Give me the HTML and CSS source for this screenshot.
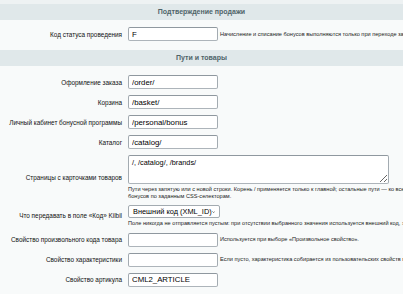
FILE: index.html
```html
<!DOCTYPE html>
<html lang="ru">
<head>
<meta charset="utf-8">
<title>Настройки</title>
<link rel="stylesheet" href="styles.css">
</head>
<body>
<div class="page">
  <div class="heading">Подтверждение продажи</div>
  <div class="section section-first">
    <div class="row">
      <div class="label">Код статуса проведения</div>
      <div class="field inline">
        <input class="input" type="text" value="F">
        <span class="hint">Начисление и списание бонусов выполняются только при переходе заказа в этот статус.</span>
      </div>
    </div>
  </div>

  <div class="heading">Пути и товары</div>
  <div class="section">
    <div class="row">
      <div class="label">Оформление заказа</div>
      <div class="field"><input class="input" type="text" value="/order/"></div>
    </div>
    <div class="row">
      <div class="label">Корзина</div>
      <div class="field"><input class="input" type="text" value="/basket/"></div>
    </div>
    <div class="row">
      <div class="label">Личный кабинет бонусной программы</div>
      <div class="field"><input class="input" type="text" value="/personal/bonus"></div>
    </div>
    <div class="row">
      <div class="label">Каталог</div>
      <div class="field"><input class="input" type="text" value="/catalog/"></div>
    </div>
    <div class="row">
      <div class="label">Страницы с карточками товаров</div>
      <div class="field">
        <textarea class="textarea">/, /catalog/, /brands/</textarea>
        <div class="hint block">
          <span class="hint-line">Пути через запятую или с новой строки. Корень / применяется только к главной; остальные пути — ко всем вложенным. Поиск</span>
          <span class="hint-line">бонусов по заданным CSS-селекторам.</span>
        </div>
      </div>
    </div>
    <div class="row">
      <div class="label">Что передавать в поле «Код» Kilbil</div>
      <div class="field">
        <div class="select">
          <span class="select-text">Внешний код (XML_ID)</span>
          <svg class="chevron" viewBox="0 0 8 5" width="6" height="4"><path d="M1 1l3 3 3-3" fill="none" stroke="#222" stroke-width="1.4"/></svg>
        </div>
        <div class="hint block">
          <span class="hint-line">Поле никогда не отправляется пустым: при отсутствии выбранного значения используется внешний код, затем ID.</span>
        </div>
      </div>
    </div>
    <div class="row">
      <div class="label">Свойство произвольного кода товара</div>
      <div class="field inline">
        <input class="input" type="text" value="">
        <span class="hint">Используется при выборе «Произвольное свойство».</span>
      </div>
    </div>
    <div class="row">
      <div class="label">Свойство характеристики</div>
      <div class="field inline">
        <input class="input" type="text" value="">
        <span class="hint">Если пусто, характеристика собирается из пользовательских свойств предложения.</span>
      </div>
    </div>
    <div class="row">
      <div class="label">Свойство артикула</div>
      <div class="field"><input class="input" type="text" value="CML2_ARTICLE"></div>
    </div>
  </div>
</div>
</body>
</html>
```

FILE: styles.css
```css
html, body {
  margin: 0;
  padding: 0;
}

body {
  background: #f8fafa;
  font-family: "Liberation Sans", Arial, sans-serif;
  color: #000;
  overflow: hidden;
  width: 403px;
  height: 294px;
}

.page {
  padding-top: 4px;
  background: linear-gradient(#eef2f3 0, #eef2f3 4px, #f8fafa 4px);
  width: 403px;
  overflow: hidden;
}

.heading {
  height: 16px;
  line-height: 16px;
  background: #e0e8ea;
  color: #4f6469;
  font-size: 7px;
  font-weight: bold;
  text-align: center;
}

.section {
  padding: 6px 0 6px;
}

.section-first {
  padding-top: 4px;
}

.row {
  display: grid;
  grid-template-columns: 122px 1fr;
  column-gap: 6px;
  align-items: center;
  padding: 3px 0;
}

.label {
  text-align: right;
  font-size: 6.4px;
  line-height: 9px;
  white-space: nowrap;
  color: #111;
}

.field {
  min-width: 0;
  white-space: nowrap;
}

.field.inline {
  display: flex;
  align-items: center;
  gap: 2px;
}

.input {
  box-sizing: border-box;
  width: 90px;
  height: 14px;
  margin: 0;
  padding: 0 3px;
  border: 1px solid;
  border-color: #8f989f #a3abb1 #adb4ba #a3abb1;
  border-radius: 2px;
  background: #fff;
  font-family: "Liberation Sans", Arial, sans-serif;
  font-size: 7.8px;
  line-height: 12px;
  color: #000;
  outline: none;
  flex: none;
  display: block;
}

.textarea {
  box-sizing: border-box;
  display: block;
  width: 261px;
  height: 29px;
  margin: 0;
  padding: 2px 3px;
  border: 1px solid;
  border-color: #8f989f #a3abb1 #adb4ba #a3abb1;
  border-radius: 2px;
  background: #fff;
  font-family: "Liberation Sans", Arial, sans-serif;
  font-size: 7.3px;
  line-height: 9px;
  color: #000;
  resize: both;
  outline: none;
}

.select {
  box-sizing: border-box;
  width: 92px;
  height: 13px;
  display: flex;
  align-items: center;
  justify-content: space-between;
  padding: 0 4px 0 4px;
  border: 1px solid #a3abb1;
  border-radius: 2px;
  background: #fff;
  font-size: 7.4px;
}

.chevron {
  display: block;
}

.hint {
  font-size: 5.6px;
  line-height: 6.5px;
  color: #222;
  white-space: nowrap;
}

.hint.block {
  display: flex;
  flex-direction: column;
  margin-top: 2px;
}

.hint-line {
  display: block;
  white-space: nowrap;
}
```
